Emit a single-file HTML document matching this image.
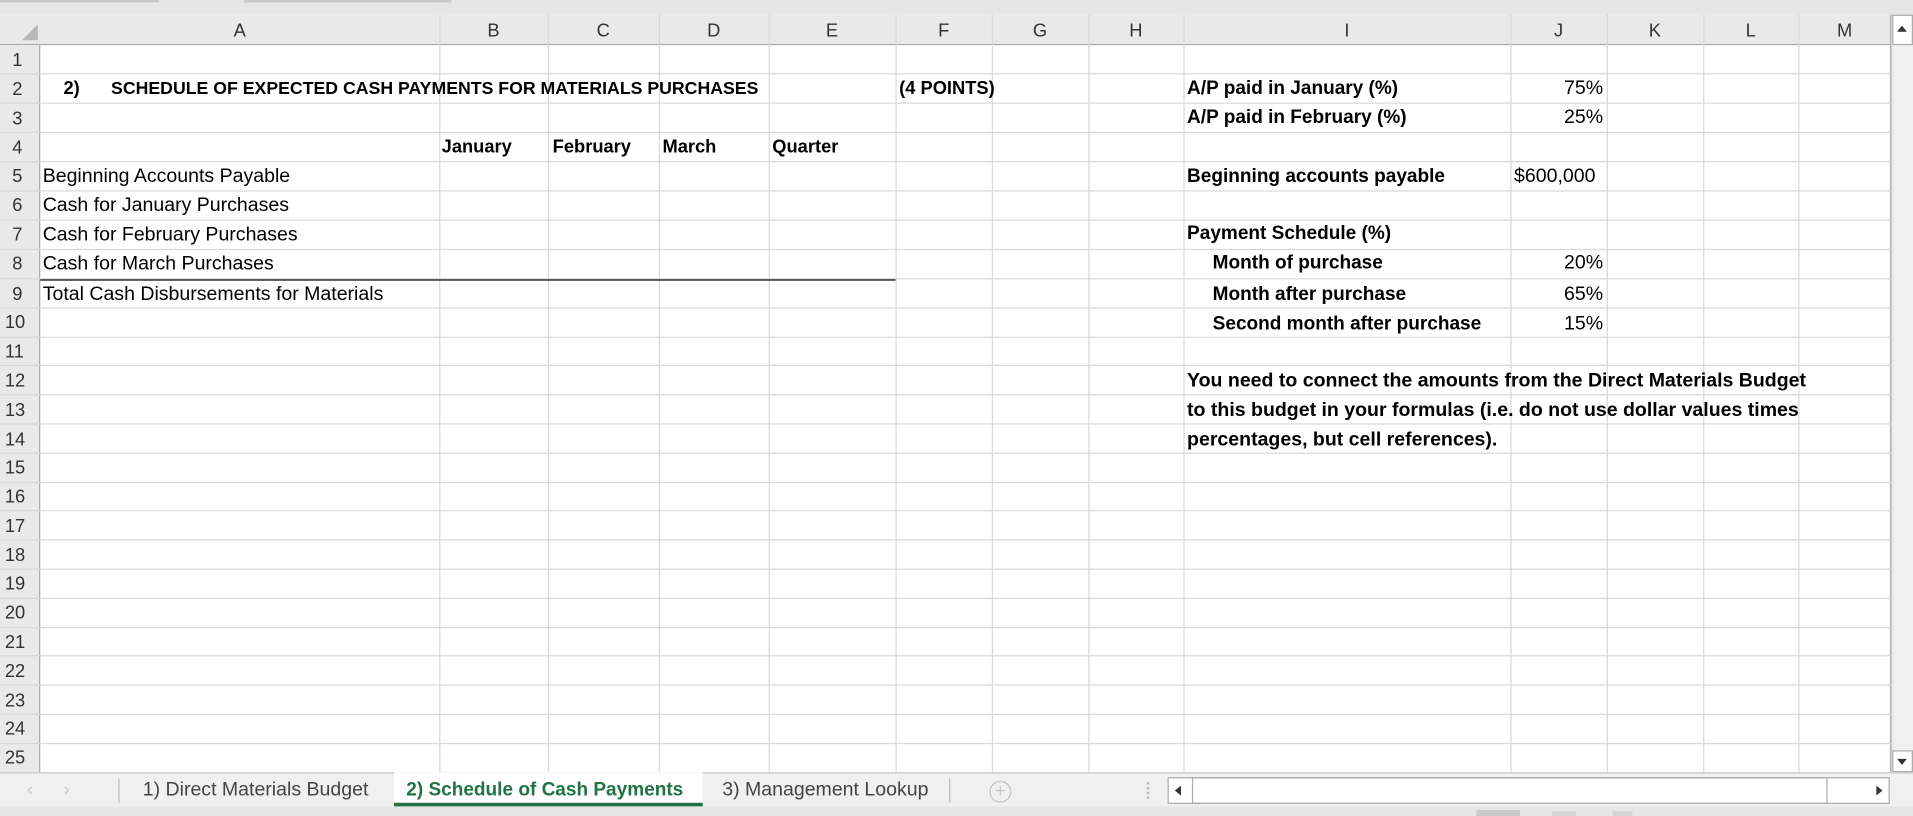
<!DOCTYPE html>
<html><head><meta charset="utf-8"><style>
*{margin:0;padding:0;box-sizing:border-box}
html,body{width:1913px;height:816px;overflow:hidden;background:#fff}
#w{position:absolute;left:0;top:0;width:1568px;height:669px;transform:scale(1.22);transform-origin:0 0;font-family:"Liberation Sans",Arial,sans-serif;font-size:15px;color:#000}
.a{position:absolute}
.vl{position:absolute;top:12px;width:1px;height:621px;background:#d9d9d9}
.hl{position:absolute;left:0;width:1550px;height:1px;background:#d9d9d9}
.ch{position:absolute;top:12px;height:25px;line-height:27px;text-align:center;color:#333;font-size:15px}
.rn{position:absolute;left:0;width:33px;height:24px;line-height:26px;padding-left:10px;color:#333;font-size:15px}
.t{position:absolute;white-space:nowrap;line-height:24px;height:24px}
.n{font-size:16px}
.rb{font-weight:bold;font-size:15.6px}
.b{font-weight:bold}
.r{text-align:right}
</style></head><body><div id="w">
<div class="a" style="left:0;top:0;width:1568px;height:12px;background:#e6e6e6"></div>
<div class="a" style="left:0;top:0;width:130px;height:2px;background:#c8c8c8"></div>
<div class="a" style="left:200px;top:0;width:170px;height:2px;background:#c8c8c8"></div>
<div class="a" style="left:0;top:12px;width:1550px;height:25px;background:#e9e9e9;border-bottom:1px solid #ababab"></div>
<div class="a" style="left:0;top:37px;width:33px;height:596px;background:#e9e9e9;border-right:1px solid #ababab"></div>
<div class="a" style="left:18px;top:20px;width:0;height:0;border-left:13px solid transparent;border-bottom:13px solid #b8b8b8"></div>
<div class="vl" style="left:360px"></div><div class="vl" style="left:449px"></div><div class="vl" style="left:540px"></div><div class="vl" style="left:630px"></div><div class="vl" style="left:734px"></div><div class="vl" style="left:813px"></div><div class="vl" style="left:892px"></div><div class="vl" style="left:970px"></div><div class="vl" style="left:1238px"></div><div class="vl" style="left:1317px"></div><div class="vl" style="left:1396px"></div><div class="vl" style="left:1474px"></div><div class="vl" style="left:1549px;background:#bbb"></div>
<div class="hl" style="top:60px"></div><div class="hl" style="top:84px"></div><div class="hl" style="top:108px"></div><div class="hl" style="top:132px"></div><div class="hl" style="top:156px"></div><div class="hl" style="top:180px"></div><div class="hl" style="top:204px"></div><div class="hl" style="top:228px"></div><div class="hl" style="top:252px"></div><div class="hl" style="top:276px"></div><div class="hl" style="top:299px"></div><div class="hl" style="top:323px"></div><div class="hl" style="top:347px"></div><div class="hl" style="top:371px"></div><div class="hl" style="top:395px"></div><div class="hl" style="top:418px"></div><div class="hl" style="top:442px"></div><div class="hl" style="top:466px"></div><div class="hl" style="top:490px"></div><div class="hl" style="top:514px"></div><div class="hl" style="top:537px"></div><div class="hl" style="top:561px"></div><div class="hl" style="top:585px"></div><div class="hl" style="top:609px"></div>
<div class="a" style="left:33px;top:229px;width:701px;height:1px;background:#000"></div>
<div class="ch" style="left:33px;width:327px">A</div><div class="ch" style="left:360px;width:89px">B</div><div class="ch" style="left:449px;width:91px">C</div><div class="ch" style="left:540px;width:90px">D</div><div class="ch" style="left:630px;width:104px">E</div><div class="ch" style="left:734px;width:79px">F</div><div class="ch" style="left:813px;width:79px">G</div><div class="ch" style="left:892px;width:78px">H</div><div class="ch" style="left:970px;width:268px">I</div><div class="ch" style="left:1238px;width:79px">J</div><div class="ch" style="left:1317px;width:79px">K</div><div class="ch" style="left:1396px;width:78px">L</div><div class="ch" style="left:1474px;width:76px">M</div>
<div class="rn" style="top:37px">1</div><div class="rn" style="top:61px">2</div><div class="rn" style="top:85px">3</div><div class="rn" style="top:109px">4</div><div class="rn" style="top:132px">5</div><div class="rn" style="top:156px">6</div><div class="rn" style="top:180px">7</div><div class="rn" style="top:204px">8</div><div class="rn" style="top:229px">9</div><div class="rn" style="top:252px;padding-left:4px">10</div><div class="rn" style="top:276px;padding-left:4px">11</div><div class="rn" style="top:300px;padding-left:4px">12</div><div class="rn" style="top:324px;padding-left:4px">13</div><div class="rn" style="top:348px;padding-left:4px">14</div><div class="rn" style="top:371px;padding-left:4px">15</div><div class="rn" style="top:395px;padding-left:4px">16</div><div class="rn" style="top:419px;padding-left:4px">17</div><div class="rn" style="top:443px;padding-left:4px">18</div><div class="rn" style="top:466px;padding-left:4px">19</div><div class="rn" style="top:490px;padding-left:4px">20</div><div class="rn" style="top:514px;padding-left:4px">21</div><div class="rn" style="top:538px;padding-left:4px">22</div><div class="rn" style="top:562px;padding-left:4px">23</div><div class="rn" style="top:585px;padding-left:4px">24</div><div class="rn" style="top:609px;padding-left:4px">25</div>
<div class="t b" style="left:52px;top:61px">2)</div>
<div class="t b" style="left:91px;top:61px;font-size:14.5px">SCHEDULE OF EXPECTED CASH PAYMENTS FOR MATERIALS PURCHASES</div>
<div class="t b" style="left:737px;top:61px">(4 POINTS)</div>
<div class="t b" style="left:362px;top:109px">January</div>
<div class="t b" style="left:453px;top:109px">February</div>
<div class="t b" style="left:543px;top:109px">March</div>
<div class="t b" style="left:633px;top:109px">Quarter</div>
<div class="t n" style="left:35px;top:133px">Beginning Accounts Payable</div>
<div class="t n" style="left:35px;top:157px">Cash for January Purchases</div>
<div class="t n" style="left:35px;top:181px">Cash for February Purchases</div>
<div class="t n" style="left:35px;top:205px">Cash for March Purchases</div>
<div class="t n" style="left:35px;top:230px">Total Cash Disbursements for Materials</div>
<div class="t rb" style="left:973px;top:61px">A/P paid in January (%)</div>
<div class="t rb" style="left:973px;top:85px">A/P paid in February (%)</div>
<div class="t r n" style="left:1238px;width:76px;top:61px">75%</div>
<div class="t r n" style="left:1238px;width:76px;top:85px">25%</div>
<div class="t rb" style="left:973px;top:133px">Beginning accounts payable</div>
<div class="t n" style="left:1241px;top:133px">$600,000</div>
<div class="t rb" style="left:973px;top:180px">Payment Schedule (%)</div>
<div class="t rb" style="left:994px;top:204px">Month of purchase</div>
<div class="t rb" style="left:994px;top:230px">Month after purchase</div>
<div class="t rb" style="left:994px;top:254px">Second month after purchase</div>
<div class="t r n" style="left:1238px;width:76px;top:204px">20%</div>
<div class="t r n" style="left:1238px;width:76px;top:230px">65%</div>
<div class="t r n" style="left:1238px;width:76px;top:254px">15%</div>
<div class="t b" style="left:973px;top:301px;font-size:16px">You need to connect the amounts from the Direct Materials Budget</div>
<div class="t b" style="left:973px;top:325px;font-size:16px">to this budget in your formulas (i.e. do not use dollar values times</div>
<div class="t b" style="left:973px;top:349px;font-size:16px">percentages, but cell references).</div>
<div class="a" style="left:1550px;top:12px;width:18px;height:621px;background:#f0f0f0;border-left:1px solid #ccc"></div>
<div class="a" style="left:1551px;top:12px;width:17px;height:25px;background:#fff;border:1px solid #aaa"></div>
<div class="a" style="left:1555px;top:21px;width:0;height:0;border-left:4px solid transparent;border-right:4px solid transparent;border-bottom:5px solid #333"></div>
<div class="a" style="left:1551px;top:615px;width:17px;height:18px;background:#fff;border:1px solid #aaa"></div>
<div class="a" style="left:1555px;top:622px;width:0;height:0;border-left:4px solid transparent;border-right:4px solid transparent;border-top:5px solid #333"></div>
<div class="a" style="left:0;top:633px;width:1568px;height:28px;background:#f0f0f0;border-top:1px solid #c6c6c6"></div>
<div class="t" style="left:22px;top:636px;color:#c8c8c8">‹</div><div class="t" style="left:52px;top:636px;color:#c8c8c8">›</div>
<div class="a" style="left:97px;top:638px;width:1px;height:20px;background:#bbb"></div>
<div class="t n" style="left:117px;top:636px;color:#444">1) Direct Materials Budget</div>
<div class="a" style="left:323px;top:633px;width:253px;height:28px;background:#fff;border-bottom:3px solid #217346"></div>
<div class="t b" style="left:333px;top:636px;color:#217346;font-size:15.6px">2) Schedule of Cash Payments</div>
<div class="t n" style="left:592px;top:636px;color:#444">3) Management Lookup</div>
<div class="a" style="left:778px;top:638px;width:1px;height:20px;background:#bbb"></div>
<div class="a" style="left:811px;top:640px;width:18px;height:18px;border:1px solid #c4c4c4;border-radius:50%;color:#c4c4c4;font-size:14px;line-height:15px;text-align:center">+</div>
<div class="a" style="left:940px;top:641px;width:2px;height:14px;border-left:2px dotted #bbb"></div>
<div class="a" style="left:957px;top:637px;width:592px;height:22px;background:#fff;border:1px solid #aaa"></div>
<div class="a" style="left:977px;top:637px;width:521px;height:22px;border:1px solid #aaa"></div>
<div class="a" style="left:963px;top:644px;width:0;height:0;border-top:4px solid transparent;border-bottom:4px solid transparent;border-right:5px solid #333"></div>
<div class="a" style="left:1538px;top:644px;width:0;height:0;border-top:4px solid transparent;border-bottom:4px solid transparent;border-left:5px solid #333"></div>
<div class="a" style="left:0;top:661px;width:1568px;height:8px;background:#e6e6e6"></div>
<div class="a" style="left:1210px;top:664px;width:36px;height:5px;background:#c8c8c8"></div>
<div class="a" style="left:1272px;top:665px;width:20px;height:4px;background:#d4d4d4"></div>
<div class="a" style="left:1322px;top:665px;width:16px;height:4px;background:#d4d4d4"></div>
</div></body></html>
